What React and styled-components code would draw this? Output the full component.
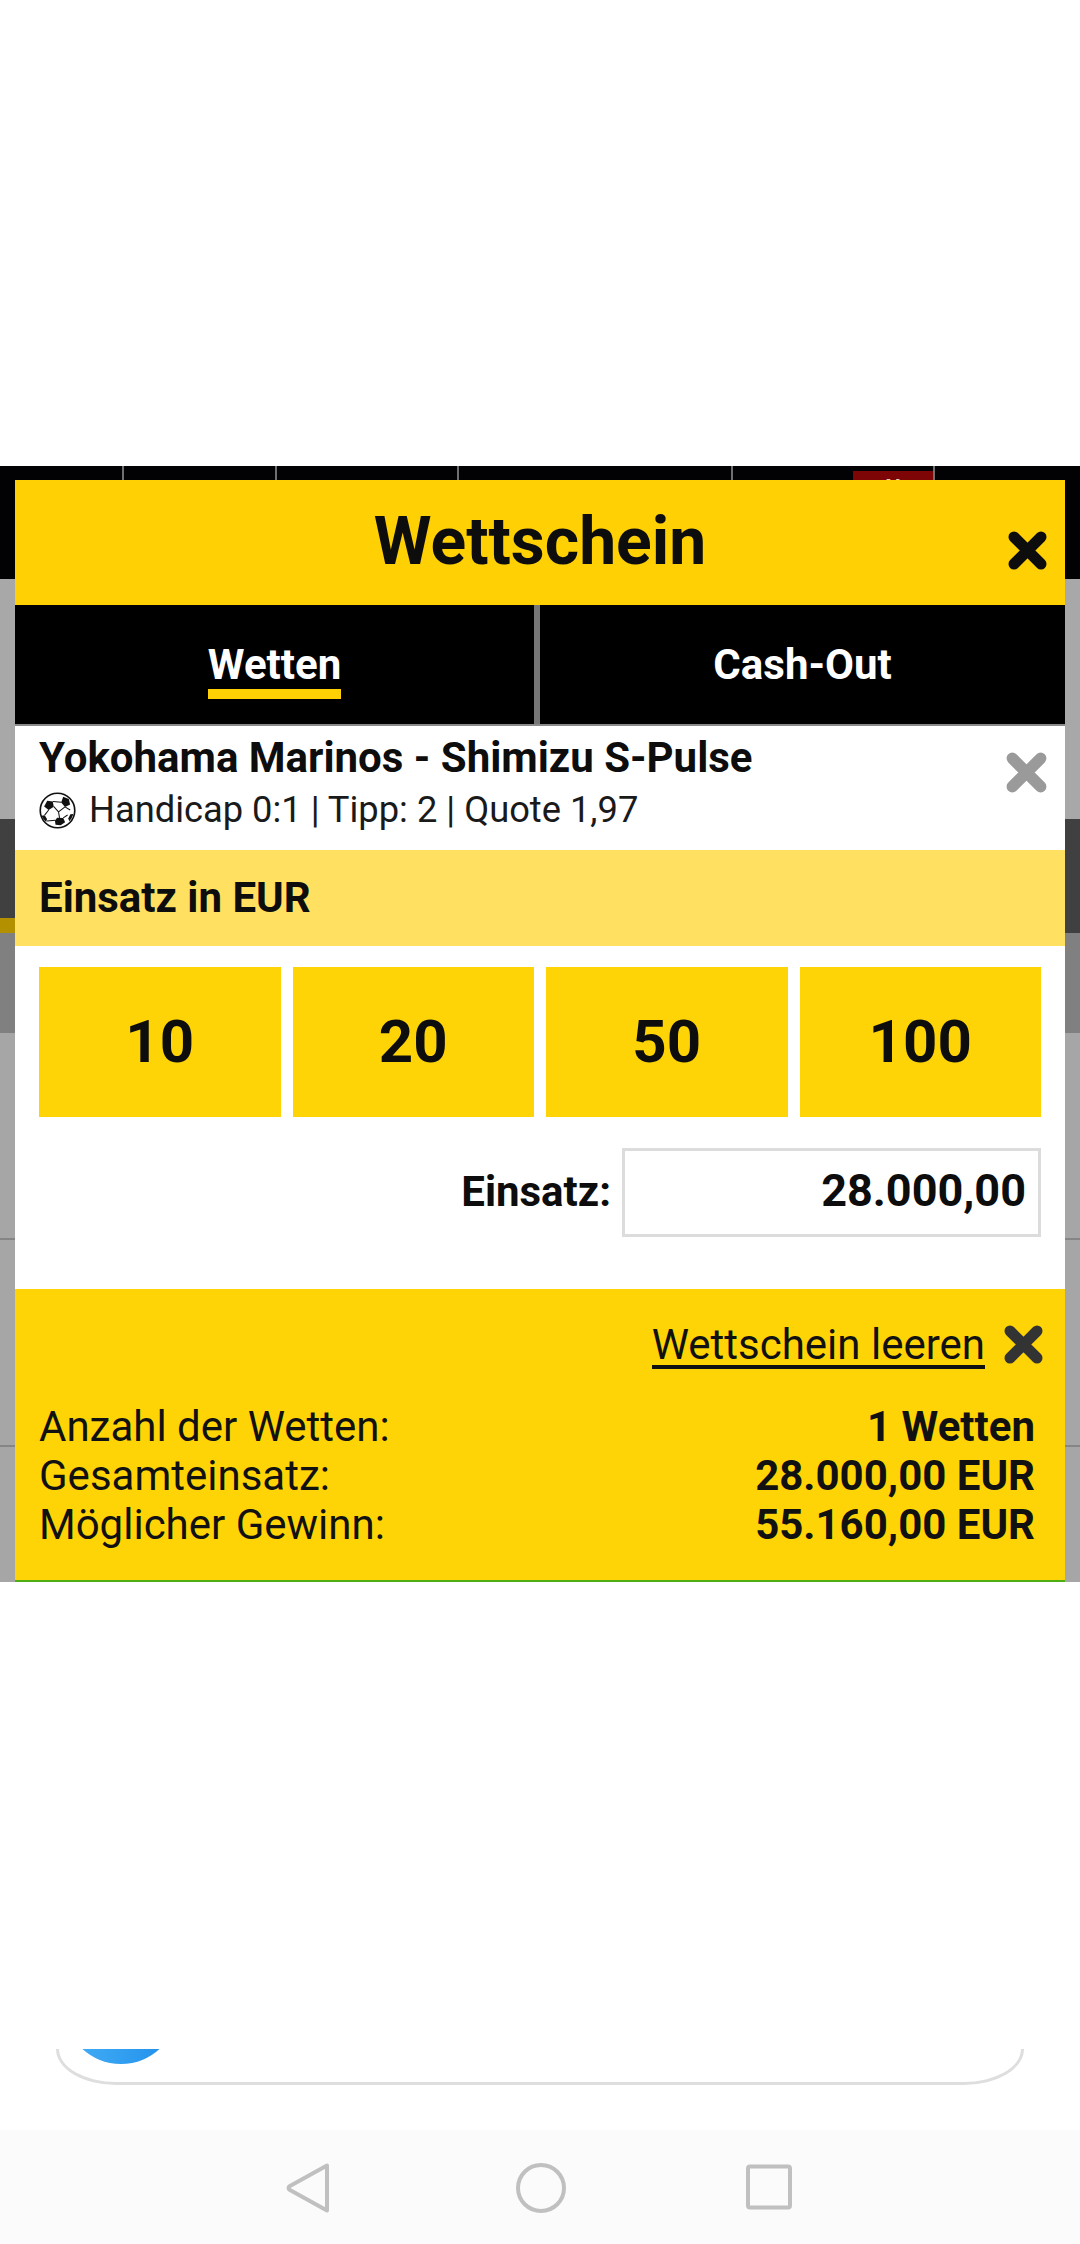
import React from "react";
import styled, { createGlobalStyle } from "styled-components";

const Global = createGlobalStyle`
  html, body { margin: 0; padding: 0; background: #fff; }
  * { box-sizing: border-box; }
  body { font-family: Roboto, "Liberation Sans", sans-serif; color: #0d0d0d; }
`;

const Page = styled.div`
  width: 1080px;
  height: 2244px;
  display: flex;
  flex-direction: column;
  background: #fff;
  overflow: hidden;
`;
const TopGap = styled.div`height: 466px;`;
const Backdrop = styled.div`
  position: relative;
  height: 1116px;
  display: flex;
  flex-direction: column;
`;
const DimNav = styled.div`
  height: 113px;
  background: #020204;
  display: flex;
`;
const DimNavCell = styled.div`
  position: relative;
  width: ${p => p.$w}px;
  border-right: 2px solid ${p => (p.$plain ? "transparent" : "#6f6f6f")};
`;
const DimBadge = styled.div`
  position: absolute;
  right: 0;
  top: 5px;
  width: 80px;
  height: 44px;
  background: #7d0505;
  color: #e8c9a8;
  font-size: 22px;
  font-weight: 700;
  text-align: center;
  line-height: 34px;
`;
const DimBand = styled.div`
  position: relative;
  height: ${p => p.$h}px;
  flex: ${p => (p.$h ? "none" : 1)};
  background: ${p => p.$bg};
  border-bottom: ${p => (p.$line ? "2px solid #858585" : "none")};
`;
const DimMark = styled.div`
  position: absolute;
  left: 0;
  top: 99px;
  width: 15px;
  height: 15px;
  background: #b39000;
`;
const Modal = styled.div`
  position: absolute;
  left: 15px;
  right: 15px;
  top: 14px;
  bottom: 0;
  display: flex;
  flex-direction: column;
  background: #fff;
  border-bottom: 2px solid #4fae12;
`;
const Header = styled.div`
  position: relative;
  height: 125px;
  background: #ffd003;
  display: flex;
  align-items: center;
  justify-content: center;
`;
const Title = styled.div`
  font-size: 66px;
  font-weight: 700;
  line-height: 1;
  color: #0d0d0d;
  margin-top: -2px;
`;
const CloseSlot = styled.div`
  position: absolute;
  right: ${p => p.$r}px;
  top: ${p => p.$t}px;
  display: flex;
`;
const Tabs = styled.div`
  height: 121px;
  display: flex;
  background: #000;
  border-bottom: 2px solid #8a8a8a;
`;
const Tab = styled.div`
  flex: ${p => (p.$first ? "0 0 525px" : 1)};
  display: flex;
  justify-content: center;
  align-items: center;
  border-right: ${p => (p.$first ? "6px solid #767676" : "none")};
`;
const TabLabel = styled.div`
  color: #fff;
  font-size: 42px;
  font-weight: 700;
  line-height: 48px;
  border-bottom: ${p => (p.$active ? "10px solid #ffd003" : "none")};
  margin-top: ${p => (p.$active ? "10px" : "0")};
`;
const BetRow = styled.div`
  position: relative;
  height: 124px;
  padding: 8px 24px 0;
  background: #fff;
`;
const BetTitle = styled.div`
  font-size: 42px;
  font-weight: 700;
  line-height: 48px;
`;
const BetInfo = styled.div`
  display: flex;
  align-items: center;
  gap: 13px;
  margin-top: 4px;
  font-size: 36.300px;
  line-height: 48px;
  color: #1a1a1a;
`;
const StakeHead = styled.div`
  height: 96px;
  padding: 0 24px 2px;
  display: flex;
  align-items: center;
  background: #ffe060;
  font-size: 42px;
  font-weight: 700;
`;
const Amounts = styled.div`
  display: grid;
  grid-template-columns: repeat(4, 1fr);
  gap: 12px;
  padding: 21px 24px 0;
`;
const Amount = styled.div`
  height: 150px;
  padding-bottom: 2px;
  display: flex;
  align-items: center;
  justify-content: center;
  background: #ffd406;
  font-size: 60px;
  font-weight: 700;
`;
const StakeLine = styled.div`
  flex: 1;
  display: flex;
  justify-content: flex-end;
  align-items: flex-start;
  padding: 31px 24px 0 0;
`;
const StakeLabel = styled.div`
  height: 89px;
  padding-bottom: 2px;
  display: flex;
  align-items: center;
  margin-right: 11px;
  font-size: 42px;
  font-weight: 700;
`;
const StakeInput = styled.div`
  width: 419px;
  height: 89px;
  display: flex;
  align-items: center;
  justify-content: flex-end;
  padding: 0 12px 4px 0;
  border: 3px solid #dcdcdc;
  font-size: 45px;
  font-weight: 700;
`;
const Footer = styled.div`
  height: 291px;
  padding: 31px 30px 0 24px;
  background: #ffd406;
`;
const ClearLine = styled.div`
  display: flex;
  justify-content: flex-end;
  align-items: center;
  gap: 18px;
  margin-right: -9px;
`;
const ClearLink = styled.div`
  font-size: 42px;
  line-height: 50px;
  height: 49px;
  border-bottom: 4px solid #111;
  color: #111;
`;
const Summary = styled.div`
  margin-top: 33px;
  display: flex;
  flex-direction: column;
`;
const SummaryRow = styled.div`
  display: flex;
  justify-content: space-between;
  font-size: 42px;
  line-height: 49px;
  color: #111;
`;
const SummaryValue = styled.span`
  font-weight: 700;
`;
const MidGap = styled.div`height: 467px;`;
const CardClip = styled.div`
  position: relative;
  height: 36px;
  margin: 0 56px;
  border: 3px solid #dedede;
  border-top: none;
  border-radius: 0 0 60px 60px / 0 0 36px 36px;
  overflow: hidden;
`;
const Avatar = styled.div`
  position: absolute;
  left: 5px;
  top: -42px;
  width: 114px;
  height: 57px;
  border-radius: 0 0 57px 57px;
  background: linear-gradient(90deg, #45b0f7, #1f8eea);
`;
const CardGap = styled.div`height: 45px;`;
const NavBar = styled.div`
  flex: 1;
  display: flex;
  align-items: flex-start;
  background: #fbfbfb;
  padding: 32px 0 0 286px;
`;
const NavSlot = styled.div`
  width: ${p => p.$w}px;
  margin-top: ${p => p.$t || 0}px;
  display: flex;
`;

const Cross = ({ size = 41, color = "#0d0d0d", weight = 11 }) => (
  <svg width={size} height={size} viewBox="0 0 41 41" fill="none">
    <path d="M7 7L34 34M34 7L7 34" stroke={color} strokeWidth={weight} strokeLinecap="round" />
  </svg>
);

const Ball = () => (
  <svg width="37" height="37" viewBox="0 0 36 36" fill="none">
    <circle cx="18" cy="18" r="16.800" fill="#fff" stroke="#111" strokeWidth="1.600" />
    <path d="M8 8.500l5.400.800 1 5-5 3.200L5 14z" fill="#111" />
    <path d="M23.500 4.500l5.500 2.200 1.300 5.400-5 2.400-3.700-4.400z" fill="#111" />
    <path d="M17.600 25l6 .200 1.800 4.200-4.300 3-5-.600-.600-3.800z" fill="#111" />
    <path d="M2.500 23l3-.500 2.300 3.800-.8 2.800A16.500 16.500 0 0 1 2.500 23z" fill="#111" />
    <path d="M33.500 21.500l-3 .200-2 4 1 2.700A16.500 16.500 0 0 0 33.500 21.500z" fill="#111" />
    <path d="M13.400 9.300l8.500.600M25.300 14.500l5 3M14.400 14.300l4.600 5M25.300 14.500L19 19.300M19 19.300l1 5.800M9.400 17.500l-3.900 5M16 27.500l-8.200.800M23.600 25.200l4.200-2.800" stroke="#111" strokeWidth="1" />
  </svg>
);

const NavBack = () => (
  <svg width="44" height="52" viewBox="0 0 44 52" fill="none">
    <path d="M41 3.500L3.500 24.300a2 2 0 0 0 0 3.400L41 48.500Z" stroke="#c0c0c0" strokeWidth="4" strokeLinejoin="round" />
  </svg>
);
const NavHome = () => (
  <svg width="52" height="52" viewBox="0 0 52 52" fill="none">
    <circle cx="26" cy="26" r="23" stroke="#c0c0c0" strokeWidth="4" />
  </svg>
);
const NavRecent = () => (
  <svg width="46" height="46" viewBox="0 0 46 46" fill="none">
    <rect x="2" y="2.500" width="42" height="41" rx="2" stroke="#c0c0c0" strokeWidth="4" />
  </svg>
);

const navCells = [124, 153, 182, 274, 202, 145];
const amounts = ["10", "20", "50", "100"];
const summary = [
  ["Anzahl der Wetten:", "1 Wetten"],
  ["Gesamteinsatz:", "28.000,00 EUR"],
  ["Möglicher Gewinn:", "55.160,00 EUR"],
];

export default function App() {
  return (
    <Page>
      <Global />
      <TopGap />
      <Backdrop>
        <DimNav>
          {navCells.map((w, i) => (
            <DimNavCell key={i} $w={w} $plain={i === navCells.length - 1}>
              {i === 4 && <DimBadge>N</DimBadge>}
            </DimNavCell>
          ))}
        </DimNav>
        <DimBand $h={240} $bg="#a8a8a8" />
        <DimBand $h={114} $bg="#404040">
          <DimMark />
        </DimBand>
        <DimBand $h={100} $bg="#808080" />
        <DimBand $h={207} $bg="#a6a6a6" $line />
        <DimBand $h={207} $bg="#a6a6a6" $line />
        <DimBand $bg="#a6a6a6" />
        <Modal>
          <Header>
            <Title>Wettschein</Title>
            <CloseSlot $r={17} $t={50}>
              <Cross />
            </CloseSlot>
          </Header>
          <Tabs>
            <Tab $first>
              <TabLabel $active>Wetten</TabLabel>
            </Tab>
            <Tab>
              <TabLabel>Cash-Out</TabLabel>
            </Tab>
          </Tabs>
          <BetRow>
            <BetTitle>Yokohama Marinos - Shimizu S-Pulse</BetTitle>
            <BetInfo>
              <Ball />
              <span>Handicap 0:1 | Tipp: 2 | Quote 1,97</span>
            </BetInfo>
            <CloseSlot $r={17} $t={25}>
              <Cross color="#9a9a9a" size={43} />
            </CloseSlot>
          </BetRow>
          <StakeHead>Einsatz in EUR</StakeHead>
          <Amounts>
            {amounts.map(a => (
              <Amount key={a}>{a}</Amount>
            ))}
          </Amounts>
          <StakeLine>
            <StakeLabel>Einsatz:</StakeLabel>
            <StakeInput>28.000,00</StakeInput>
          </StakeLine>
          <Footer>
            <ClearLine>
              <ClearLink>Wettschein leeren</ClearLink>
              <Cross color="#333" />
            </ClearLine>
            <Summary>
              {summary.map(([k, v]) => (
                <SummaryRow key={k}>
                  <span>{k}</span>
                  <SummaryValue>{v}</SummaryValue>
                </SummaryRow>
              ))}
            </Summary>
          </Footer>
        </Modal>
      </Backdrop>
      <MidGap />
      <CardClip>
        <Avatar />
      </CardClip>
      <CardGap />
      <NavBar>
        <NavSlot $w={229}><NavBack /></NavSlot>
        <NavSlot $w={231}><NavHome /></NavSlot>
        <NavSlot $w={46} $t={2}><NavRecent /></NavSlot>
      </NavBar>
    </Page>
  );
}
